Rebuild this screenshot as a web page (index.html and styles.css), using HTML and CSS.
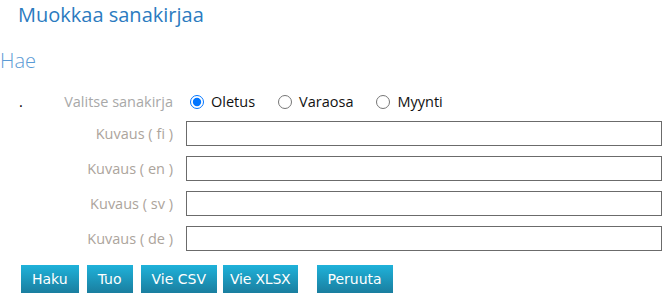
FILE: index.html
```html
<!DOCTYPE html>
<html lang="fi">
<head>
    <meta charset="UTF-8">
    <title>Muokkaa sanakirjaa</title>
    <link rel="stylesheet" href="styles.css">
</head>
<body>
    <h1 class="page-title">Muokkaa sanakirjaa</h1>
    <h2 class="section-title">Hae</h2>

    <form class="search-form">
        <div class="row row-dict">
            <div class="label"><span class="mark">.</span>Valitse sanakirja</div>
            <div class="field radios">
                <label class="radio"><input type="radio" name="dict" checked> Oletus</label>
                <label class="radio"><input type="radio" name="dict"> Varaosa</label>
                <label class="radio"><input type="radio" name="dict"> Myynti</label>
            </div>
        </div>
        <div class="row">
            <div class="label">Kuvaus ( fi )</div>
            <div class="field"><input type="text" class="text-input"></div>
        </div>
        <div class="row">
            <div class="label">Kuvaus ( en )</div>
            <div class="field"><input type="text" class="text-input"></div>
        </div>
        <div class="row">
            <div class="label">Kuvaus ( sv )</div>
            <div class="field"><input type="text" class="text-input"></div>
        </div>
        <div class="row">
            <div class="label">Kuvaus ( de )</div>
            <div class="field"><input type="text" class="text-input"></div>
        </div>

        <div class="buttons">
            <button type="button" class="btn">Haku</button>
            <button type="button" class="btn">Tuo</button>
            <button type="button" class="btn btn-csv">Vie CSV</button>
            <button type="button" class="btn btn-xlsx">Vie XLSX</button>
            <button type="button" class="btn btn-cancel">Peruuta</button>
        </div>
    </form>
</body>
</html>
```

FILE: styles.css
```css
body {
    margin: 0;
    font-family: "Open Sans", "Noto Sans", sans-serif;
    color: #222;
    background-color: #fff;
}
.page-title {
    margin: 0;
    padding: 1px 0 0 18px;
    font-size: 20px;
    font-weight: normal;
    color: #2b7bbf;
    line-height: 27px;
}
.section-title {
    margin: 20px 0 0 0;
    font-size: 20px;
    font-weight: 300;
    color: #5b9bd5;
    line-height: 26px;
}
.search-form {
    margin-top: 13px;
}
.row {
    display: flex;
    align-items: center;
    height: 35px;
}
.row-dict {
    height: 29px;
}
.label {
    width: 173px;
    flex: none;
    padding-right: 13px;
    text-align: right;
    font-size: 14.5px;
    color: #aca49c;
    display: flex;
    justify-content: flex-end;
}
.row-dict .label {
    color: #a8a8a8;
    justify-content: space-between;
}
.mark {
    color: #000;
    padding-left: 19px;
}
.field {
    width: 476px;
}
.radios {
    display: flex;
    align-items: center;
    font-size: 14.5px;
    color: #111;
}
.radio {
    display: flex;
    align-items: center;
    margin-right: 19px;
}
.radio input {
    width: 14px;
    height: 14px;
    margin: 0 7px 0 4px;
    accent-color: #0075ff;
}
.text-input {
    box-sizing: border-box;
    width: 100%;
    height: 25px;
    border: 1.5px solid #6b6b6b;
    border-radius: 0;
    padding: 2px 4px;
    font-family: inherit;
    font-size: 14px;
}
.buttons {
    display: flex;
    margin: 9px 0 0 21px;
}
.btn {
    height: 28px;
    padding: 0 11px;
    margin-right: 8px;
    border: none;
    border-radius: 0;
    background: linear-gradient(#1fb2da, #1a7e9f);
    color: #fff;
    font-family: "DejaVu Sans", Verdana, sans-serif;
    font-size: 14px;
}
.btn-csv {
    margin-right: 6px;
}
.btn-xlsx {
    padding: 0 7px;
    letter-spacing: -0.2px;
}
.btn-cancel {
    margin-left: 11px;
}
```
